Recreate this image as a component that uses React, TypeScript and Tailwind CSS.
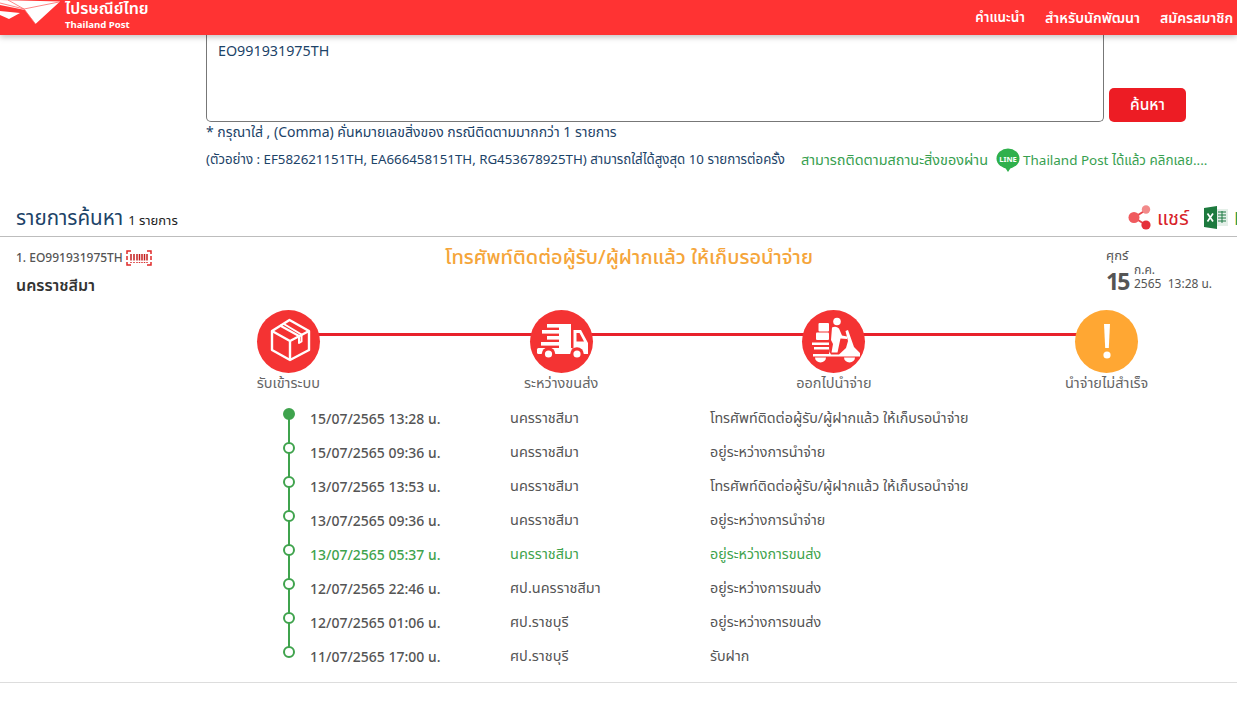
const font = { fontFamily: '"Noto Sans", "Noto Sans Thai", "Noto Sans CJK SC", sans-serif' };

const rows = [
  ['15/07/2565 13:28 น.', 'นครราชสีมา', 'โทรศัพท์ติดต่อผู้รับ/ผู้ฝากแล้ว ให้เก็บรอนำจ่าย'],
  ['15/07/2565 09:36 น.', 'นครราชสีมา', 'อยู่ระหว่างการนำจ่าย'],
  ['13/07/2565 13:53 น.', 'นครราชสีมา', 'โทรศัพท์ติดต่อผู้รับ/ผู้ฝากแล้ว ให้เก็บรอนำจ่าย'],
  ['13/07/2565 09:36 น.', 'นครราชสีมา', 'อยู่ระหว่างการนำจ่าย'],
  ['13/07/2565 05:37 น.', 'นครราชสีมา', 'อยู่ระหว่างการขนส่ง'],
  ['12/07/2565 22:46 น.', 'ศป.นครราชสีมา', 'อยู่ระหว่างการขนส่ง'],
  ['12/07/2565 01:06 น.', 'ศป.ราชบุรี', 'อยู่ระหว่างการขนส่ง'],
  ['11/07/2565 17:00 น.', 'ศป.ราชบุรี', 'รับฝาก'],
];

function Logo() {
  return (
    <svg width="60" height="26" viewBox="0 0 60 26" className="shrink-0">
      <path d="M0 0 L60 1.5 L35.5 24 L25 10 L0 5 Z" fill="#fff" />
      <path d="M0 3 L24 9 L35.5 24 M24 9 L59 2 M8 0 L24 9" fill="none" stroke="#ff6a6a" strokeWidth="0.8" />
      <path d="M0 11 L20 13 L9 19 L0 15 Z" fill="#fff" />
    </svg>
  );
}

function BoxIcon() {
  return (
    <svg width="63" height="63" viewBox="0 0 63 63" fill="none" stroke="#fff" strokeWidth="2.4" strokeLinejoin="round">
      <path d="M32.5 10 L52 21 V40 L33 50 L15 40 V21 Z" />
      <path d="M15 21 L33 31 L52 21 M33 31 V50" />
      <path d="M23 15.5 L42 26 V33 L44.5 31.5 V24.5 L26 13.5" strokeWidth="2" />
    </svg>
  );
}

function TruckIcon() {
  return (
    <svg width="63" height="63" viewBox="0 0 63 63" fill="#fff">
      <rect x="17" y="14" width="24" height="3.6" />
      <rect x="12" y="20" width="29" height="3.6" />
      <rect x="17" y="26" width="24" height="3.6" />
      <rect x="11" y="32" width="30" height="3.6" />
      <rect x="29" y="14" width="12" height="24" />
      <rect x="7" y="38" width="36" height="6" rx="1.5" />
      <path d="M43.5 20 H51 L58 33 V44 H43.5 Z" />
      <path d="M46.5 23 H49.5 L54 31.5 H46.5 Z" fill="#f43333" />
      <circle cx="18.5" cy="44" r="6.8" fill="#f43333" />
      <circle cx="18.5" cy="44" r="3.6" />
      <circle cx="47" cy="44" r="6.8" fill="#f43333" />
      <circle cx="47" cy="44" r="3.6" />
    </svg>
  );
}

function ScooterIcon() {
  return (
    <svg width="63" height="63" viewBox="0 0 63 63" fill="#fff">
      <circle cx="35" cy="11.5" r="3.8" />
      <path d="M30 17.5 Q34 15.5 37 18.5 L40 25.5 L45 26.5 V29 L38.5 28.5 L37.5 33 L35.5 42.5 H29.5 L31 34 L29 30 Z" />
      <rect x="16.5" y="13" width="10.5" height="8.5" rx="1" />
      <rect x="14" y="22.5" width="13" height="7.5" rx="1" />
      <path d="M10 32.5 H27 V35 H10 Z M12 37 H27 V39.5 H12 Z" />
      <path d="M11 46.5 V44 H27 L28 36.5 L27.5 42 L29 44.5 H37 L44 38 L46 31 L43.5 21 L46 20 L52 37 L58 43 V46.5 Z" />
      <path d="M13 47.5 H24 A5.5 5 0 0 1 13 47.5 Z" />
      <path d="M42 47.5 H53 A5.5 5 0 0 1 42 47.5 Z" />
    </svg>
  );
}

function BarcodeIcon() {
  return (
    <svg width="26" height="16" viewBox="0 0 26 16" fill="none" className="ml-[3px]">
      <path d="M5 1 H1 V4 M21 1 H25 V4 M5 15 H1 V12 M21 15 H25 V12 M1 6 V10 M25 6 V10" stroke="#e02a2a" strokeWidth="1.5" />
      <path d="M5 4 V10.5 M8 4 V10.5 M11 4 V10.5 M13.5 4 V10.5 M16 4 V10.5 M18.5 4 V10.5 M21 4 V10.5" stroke="#c41e1e" strokeWidth="1.5" />
      <path d="M5 12 V13 M8 12 V13 M11 12 V13 M13.5 12 V13 M16 12 V13 M18.5 12 V13 M21 12 V13" stroke="#d83030" strokeWidth="1.5" />
    </svg>
  );
}

function ShareIcon() {
  return (
    <svg width="24" height="25" viewBox="0 0 24 25" className="shrink-0">
      <path d="M6 12.5 L18 5 M6 12.5 L18 20" stroke="#e8474c" strokeWidth="2" />
      <circle cx="6" cy="12.5" r="5.5" fill="#f05a5e" />
      <circle cx="18" cy="4.5" r="4.2" fill="#f28a8a" />
      <circle cx="18" cy="20" r="4.6" fill="#e5303a" />
    </svg>
  );
}

function ExcelIcon() {
  return (
    <svg width="24" height="23" viewBox="0 0 24 23" className="shrink-0">
      <rect x="9" y="3" width="15" height="17" fill="#e4efe8" />
      <path d="M14 6 H22 M14 9 H22 M14 12 H22 M14 15 H22 M18 5 V17" stroke="#1f7a45" strokeWidth="1" />
      <path d="M0 2 L13 0 V23 L0 21 Z" fill="#1d7a3e" />
      <path d="M3.5 7.5 L9 15.5 M9 7.5 L3.5 15.5" stroke="#fff" strokeWidth="1.7" />
    </svg>
  );
}

function LineIcon() {
  return (
    <svg width="24" height="24" viewBox="0 0 24 24" className="shrink-0">
      <ellipse cx="12" cy="10.5" rx="11.5" ry="10" fill="#2fb04c" />
      <path d="M8 18 L12 24 L16 18 Z" fill="#2fb04c" />
      <text x="12" y="13.5" textAnchor="middle" fontSize="7.5" fontWeight="700" fill="#fff" fontFamily="Noto Sans, sans-serif">LINE</text>
    </svg>
  );
}

function Step({ label, color, children }: { label: string; color: string; children: React.ReactNode }) {
  return (
    <div className="relative flex flex-col items-center">
      <div className={`flex h-[63px] w-[63px] items-center justify-center rounded-full ${color}`}>{children}</div>
      <div className="-mt-[1px] whitespace-nowrap text-[14.5px] leading-[20px] text-[#666]">{label}</div>
    </div>
  );
}

export default function App() {
  return (
    <div className="relative h-[704px] w-[1237px] overflow-hidden bg-white" style={font}>
      <header className="relative z-10 flex h-[35px] items-center justify-between overflow-hidden bg-[#ff3333] pr-[4px] shadow-[0_2px_6px_rgba(0,0,0,0.25)]">
        <div className="flex items-start self-start">
          <Logo />
          <div className="ml-[5px] text-white">
            <div className="h-[19px] overflow-visible text-[16px] font-semibold leading-[17px]">ไปรษณีย์ไทย</div>
            <div className="text-[9.6px] font-bold leading-[11px]">Thailand Post</div>
          </div>
        </div>
        <nav className="flex items-center gap-[20px] whitespace-nowrap font-semibold text-white">
          <span className="text-[13.4px]">คำแนะนำ</span>
          <span className="text-[14.2px]">สำหรับนักพัฒนา</span>
          <span className="text-[14px]">สมัครสมาชิก</span>
        </nav>
      </header>

      <section className="pl-[206px]">
        <div className="flex items-end">
          <div className="h-[87px] w-[898px] rounded-b-[5px] border-x border-b border-[#777] px-[11px] pt-[5px] text-[14.3px] leading-[22px] text-[#1c4368]">
            EO991931975TH
          </div>
          <button className="ml-[5px] h-[34px] w-[77px] rounded-[5px] bg-[#ed1c24] text-[15.5px] font-medium text-white">ค้นหา</button>
        </div>
        <p className="text-[14px] leading-[20px] text-[#1c4368]">* กรุณาใส่ , (Comma) คั่นหมายเลขสิ่งของ กรณีติดตามมากกว่า 1 รายการ</p>
        <div className="mt-[6px] flex h-[24px] items-center whitespace-nowrap">
          <span className="text-[13.3px] text-[#1c4368]">(ตัวอย่าง : EF582621151TH, EA666458151TH, RG453678925TH) สามารถใส่ได้สูงสุด 10 รายการต่อครั้ง</span>
          <span className="ml-[16px] text-[14.45px] text-[#37a04f]">สามารถติดตามสถานะสิ่งของผ่าน</span>
          <span className="ml-[8px]"><LineIcon /></span>
          <span className="ml-[3px] text-[13.45px] text-[#37a04f]">Thailand Post ได้แล้ว คลิกเลย....</span>
        </div>
      </section>

      <section className="mt-[32px] flex h-[33px] items-center justify-between border-b border-[#bdbdbd] pb-[5px] pl-[16px]">
        <div className="flex items-baseline whitespace-nowrap text-[#1c4368]">
          <span className="text-[20.6px]">รายการค้นหา</span>
          <span className="ml-[5px] text-[13px] text-[#222]">1 รายการ</span>
        </div>
        <div className="flex w-[109px] shrink-0 items-center">
          <ShareIcon />
          <span className="ml-[5px] text-[20px] leading-[24px] text-[#d81f2a]">แชร์</span>
          <span className="ml-[15px]"><ExcelIcon /></span>
          <span className="ml-[6px] text-[18px] leading-[24px] text-[#2a9d4a]">E</span>
        </div>
      </section>

      <section className="flex h-[63px] pl-[16px] pt-[10px]">
        <div className="w-[300px]">
          <div className="flex items-center whitespace-nowrap text-[12px] font-medium leading-[22px] text-[#555]">1. EO991931975TH<BarcodeIcon /></div>
          <div className="mt-[4px] text-[16px] font-semibold leading-[24px] text-[#333]">นครราชสีมา</div>
        </div>
        <div className="-mt-[2px] w-[626px] text-center text-[20px] font-medium leading-[24px] text-[#f5a53a]">โทรศัพท์ติดต่อผู้รับ/ผู้ฝากแล้ว ให้เก็บรอนำจ่าย</div>
        <div className="ml-[164px] text-[#555]">
          <div className="text-[13px] leading-[16px]">ศุกร์</div>
          <div className="flex items-start">
            <span className="mt-[4px] w-[22px] text-[23px] font-bold leading-[28px] tracking-[-2px]">15</span>
            <span className="ml-[6px] whitespace-nowrap text-[12px] leading-[14px]">
              ก.ค.<br />2565&nbsp; 13:28 น.
            </span>
          </div>
        </div>
      </section>

      <section className="relative ml-[152px] mt-[10px] grid w-[1091px] grid-cols-4">
        <div className="absolute left-[137px] top-[23px] h-[3px] w-[817px] bg-[#e8212b]" />
        <Step label="รับเข้าระบบ" color="bg-[#f43333]"><BoxIcon /></Step>
        <Step label="ระหว่างขนส่ง" color="bg-[#f43333]"><TruckIcon /></Step>
        <Step label="ออกไปนำจ่าย" color="bg-[#f43333]"><ScooterIcon /></Step>
        <Step label="นำจ่ายไม่สำเร็จ" color="bg-[#ffa733]">
          <svg width="14" height="38" viewBox="0 0 14 38" fill="#fff"><path d="M4 1 H10 L8.8 25 H5.2 Z" /><circle cx="7" cy="32" r="3.6" /></svg>
        </Step>
      </section>

      <section className="relative ml-[283px] mt-[9px]">
        <div className="absolute left-[4.75px] top-[13px] h-[238px] w-[2.5px] bg-[#3fa34d]" />
        {rows.map((r, i) => {
          const green = i === 4;
          return (
            <div key={i} className={`relative flex h-[34px] items-center whitespace-nowrap ${green ? 'text-[#3fa34d]' : 'text-[#555]'}`}>
              <span className={`-mt-[8px] h-[12px] w-[12px] shrink-0 rounded-full border-[2.5px] border-[#3fa34d] ${i === 0 ? 'bg-[#3fa34d]' : 'bg-white'}`} />
              <span className="ml-[15px] w-[200px] text-[14px] font-medium">{r[0]}</span>
              <span className="w-[200px] text-[14.5px]">{r[1]}</span>
              <span className="text-[14.3px]">{r[2]}</span>
            </div>
          );
        })}
      </section>
      <div className="mt-[9px] border-t border-[#ddd]" />
    </div>
  );
}
